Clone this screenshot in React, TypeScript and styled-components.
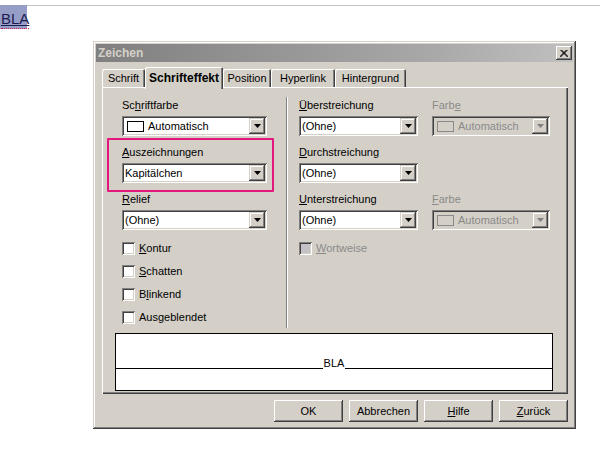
import React from 'react';
import styled, { createGlobalStyle } from 'styled-components';

const Global = createGlobalStyle`
  html, body { margin: 0; padding: 0; background: #fff; }
  body {
    font-family: "Liberation Sans", Arial, sans-serif;
    font-size: 11px;
    color: #000;
    width: 600px;
    height: 449px;
    overflow: hidden;
  }
  u { text-underline-offset: 1px; }
`;

const Doc = styled.div`
  display: flex;
  height: 41px;
`;

const Selection = styled.div`
  width: 27px;
  height: 24px;
  margin-top: 5px;
  background: #969ec8;
  display: flex;
  align-items: flex-end;
  padding-left: 1px;
  box-sizing: border-box;
`;

const Word = styled.span`
  font-size: 15px;
  line-height: 17px;
  color: #1c1c52;
  text-decoration: underline;
  text-decoration-color: #1c1c52;
  text-underline-offset: 1px;
  border-bottom: 1px dotted #d02050;
  padding-bottom: 1px;
`;

const Rule = styled.div`
  flex: 1;
  margin-top: 5px;
  border-top: 1px solid #c4c4c4;
`;

const Dialog = styled.div`
  margin-left: 93px;
  width: 483px;
  height: 388px;
  box-sizing: border-box;
  padding: 3px;
  background: #d4d0c8;
  box-shadow: inset -1px -1px #404040, inset 1px 1px #d4d0c8, inset -2px -2px #808080, inset 2px 2px #fff;
  display: flex;
  flex-direction: column;
`;

const TitleBar = styled.div`
  height: 18px;
  background: linear-gradient(90deg, #808080 0%, #a8a8a8 70%, #c0c0c0 100%);
  display: flex;
  align-items: center;
  justify-content: space-between;
  padding: 0 1px 0 2px;
`;

const Title = styled.span`
  font-weight: bold;
  font-size: 12px;
  color: #d4d0c8;
`;

const CloseButton = styled.div`
  width: 16px;
  height: 14px;
  background: #d4d0c8;
  box-shadow: inset -1px -1px #404040, inset 1px 1px #fff, inset -2px -2px #808080;
  display: flex;
  align-items: center;
  justify-content: center;
`;

const Body = styled.div`
  padding: 5px 5px 4px 6px;
  display: flex;
  flex-direction: column;
`;

const TabStrip = styled.div`
  height: 20px;
  display: flex;
  align-items: flex-end;
`;

const Tab = styled.div<{ $w: number; $active?: boolean }>`
  position: relative;
  z-index: ${p => (p.$active ? 1 : 0)};
  width: ${p => p.$w}px;
  height: ${p => (p.$active ? 22 : 18)}px;
  margin-bottom: ${p => (p.$active ? -2 : 0)}px;
  box-sizing: border-box;
  background: #d4d0c8;
  border-top-left-radius: 2px;
  border-top-right-radius: 2px;
  box-shadow: inset 1px 1px #fff, inset -1px 0 #404040, inset -2px 0 #808080;
  font-weight: ${p => (p.$active ? 'bold' : 'normal')};
  font-size: ${p => (p.$active ? 12 : 11)}px;
  display: flex;
  justify-content: center;
  padding-top: ${p => (p.$active ? 4 : 3)}px;
`;

const Panel = styled.div`
  width: 466px;
  height: 307px;
  box-sizing: border-box;
  background: #d4d0c8;
  box-shadow: inset 1px 1px #fff, inset -1px -1px #404040, inset -2px -2px #808080;
  display: flex;
  flex-direction: column;
`;

const Columns = styled.div`
  height: 246px;
  display: grid;
  grid-template-columns: 184px 2px 1fr;
`;

const LeftColumn = styled.div`
  padding: 12px 0 0 20px;
  display: flex;
  flex-direction: column;
  gap: 10px;
`;

const RightColumn = styled.div`
  padding: 12px 0 0 11px;
  display: flex;
  flex-direction: column;
  gap: 10px;
`;

const Separator = styled.div`
  margin: 10px 0 5px;
  border-left: 1px solid #808080;
  border-right: 1px solid #fff;
`;

const Group = styled.div<{ $highlight?: boolean }>`
  display: flex;
  flex-direction: column;
  gap: 4px;
  width: fit-content;
  ${p =>
    p.$highlight
      ? `
    border: 2px solid #e3187e;
    border-radius: 1px;
    padding: 6px 5px 7px 13px;
    margin: -8px 0 -9px -15px;
  `
      : ''}
`;

const Row = styled.div`
  display: flex;
  gap: 14px;
`;

const Label = styled.div<{ $disabled?: boolean }>`
  line-height: 13px;
  height: 13px;
  color: ${p => (p.$disabled ? '#8a8a8a' : '#000')};
  white-space: nowrap;
`;

const Listbox = styled.div<{ $w: number; $disabled?: boolean }>`
  width: ${p => p.$w}px;
  height: 20px;
  box-sizing: border-box;
  padding: 2px;
  display: flex;
  align-items: center;
  background: ${p => (p.$disabled ? '#d4d0c8' : '#fff')};
  box-shadow: inset 1px 1px #808080, inset -1px -1px #fff, inset 2px 2px #404040, inset -2px -2px #d4d0c8;
`;

const Value = styled.div<{ $disabled?: boolean }>`
  flex: 1;
  display: flex;
  align-items: center;
  gap: 4px;
  padding-left: 1px;
  color: ${p => (p.$disabled ? '#8a8a8a' : '#000')};
  white-space: nowrap;
`;

const Swatch = styled.div<{ $disabled?: boolean }>`
  width: 17px;
  height: 11px;
  box-sizing: border-box;
  margin-left: 2px;
  border: 1px solid ${p => (p.$disabled ? '#8a8a8a' : '#000')};
  background: ${p => (p.$disabled ? '#d4d0c8' : '#fff')};
`;

const DropButton = styled.div`
  width: 16px;
  height: 16px;
  flex: none;
  background: #d4d0c8;
  box-shadow: inset -1px -1px #404040, inset 1px 1px #d4d0c8, inset -2px -2px #808080, inset 2px 2px #fff;
  display: flex;
  align-items: center;
  justify-content: center;
`;

const Checks = styled.div<{ $top: number }>`
  margin-top: ${p => p.$top}px;
  display: flex;
  flex-direction: column;
  gap: 10px;
`;

const CheckRow = styled.div<{ $disabled?: boolean }>`
  display: flex;
  align-items: center;
  gap: 4px;
  height: 13px;
  line-height: 13px;
  color: ${p => (p.$disabled ? '#8a8a8a' : '#000')};
`;

const Box = styled.div<{ $disabled?: boolean }>`
  width: 13px;
  height: 13px;
  box-sizing: border-box;
  background: ${p => (p.$disabled ? '#c4c2c6' : '#fff')};
  box-shadow: inset 1px 1px #808080, inset -1px -1px #fff, inset 2px 2px #404040, inset -2px -2px #d4d0c8;
`;

const Preview = styled.div`
  margin: 0 15px 0 13px;
  height: 58px;
  box-sizing: border-box;
  background: #fff;
  border: 1px solid #000;
`;

const PreviewTop = styled.div`
  height: 34px;
  border-bottom: 1px solid #000;
  display: flex;
  justify-content: center;
  align-items: flex-end;
`;

const PreviewText = styled.span`
  line-height: 11px;
  margin-bottom: -1px;
  background: #fff;
  padding: 0 1px;
`;

const ButtonRow = styled.div`
  margin-top: 6px;
  display: flex;
  justify-content: flex-end;
  gap: 6px;
  width: 466px;
`;

const Button = styled.div`
  width: 69px;
  height: 22px;
  box-sizing: border-box;
  background: #d4d0c8;
  box-shadow: inset -1px -1px #404040, inset 1px 1px #fff, inset -2px -2px #808080;
  display: flex;
  align-items: center;
  justify-content: center;
`;

const Arrow: React.FC<{ disabled?: boolean }> = ({ disabled }) => (
  <svg width="7" height="4" viewBox="0 0 7 4">
    <polygon points="0,0 7,0 3.5,4" fill={disabled ? '#808080' : '#000'} />
  </svg>
);

const Select: React.FC<{ w: number; value: string; swatch?: boolean; disabled?: boolean }> = ({ w, value, swatch, disabled }) => (
  <Listbox $w={w} $disabled={disabled}>
    <Value $disabled={disabled}>
      {swatch && <Swatch $disabled={disabled} />}
      {value}
    </Value>
    <DropButton>
      <Arrow disabled={disabled} />
    </DropButton>
  </Listbox>
);

const Check: React.FC<{ children: React.ReactNode; disabled?: boolean }> = ({ children, disabled }) => (
  <CheckRow $disabled={disabled}>
    <Box $disabled={disabled} />
    <span>{children}</span>
  </CheckRow>
);

export default function App() {
  return (
    <>
      <Global />
      <Doc>
        <Selection>
          <Word>BLA</Word>
        </Selection>
        <Rule />
      </Doc>
      <Dialog>
        <TitleBar>
          <Title>Zeichen</Title>
          <CloseButton>
            <svg width="8" height="7" viewBox="0 0 8 7">
              <path d="M0.5 0 L7.5 7 M1.5 0 L8.5 7 M7.5 0 L0.5 7 M6.5 0 L-0.5 7" stroke="#000" strokeWidth="1" />
            </svg>
          </CloseButton>
        </TitleBar>
        <Body>
          <TabStrip>
            <Tab $w={43}>Schrift</Tab>
            <Tab $w={78} $active>Schrifteffekt</Tab>
            <Tab $w={48}>Position</Tab>
            <Tab $w={64}>Hyperlink</Tab>
            <Tab $w={71}>Hintergrund</Tab>
          </TabStrip>
          <Panel>
            <Columns>
              <LeftColumn>
                <Group>
                  <Label>Sc<u>h</u>riftfarbe</Label>
                  <Select w={145} value="Automatisch" swatch />
                </Group>
                <Group $highlight>
                  <Label><u>A</u>uszeichnungen</Label>
                  <Select w={145} value="Kapitälchen" />
                </Group>
                <Group>
                  <Label><u>R</u>elief</Label>
                  <Select w={145} value="(Ohne)" />
                </Group>
                <Checks $top={2}>
                  <Check><u>K</u>ontur</Check>
                  <Check><u>S</u>chatten</Check>
                  <Check>B<u>l</u>inkend</Check>
                  <Check>Aus<u>g</u>eblendet</Check>
                </Checks>
              </LeftColumn>
              <Separator />
              <RightColumn>
                <Row>
                  <Group>
                    <Label><u>Ü</u>berstreichung</Label>
                    <Select w={119} value="(Ohne)" />
                  </Group>
                  <Group>
                    <Label $disabled>Farb<u>e</u></Label>
                    <Select w={118} value="Automatisch" swatch disabled />
                  </Group>
                </Row>
                <Row>
                  <Group>
                    <Label><u>D</u>urchstreichung</Label>
                    <Select w={119} value="(Ohne)" />
                  </Group>
                </Row>
                <Row>
                  <Group>
                    <Label><u>U</u>nterstreichung</Label>
                    <Select w={119} value="(Ohne)" />
                  </Group>
                  <Group>
                    <Label $disabled><u>F</u>arbe</Label>
                    <Select w={118} value="Automatisch" swatch disabled />
                  </Group>
                </Row>
                <Checks $top={2}>
                  <Check disabled><u>W</u>ortweise</Check>
                </Checks>
              </RightColumn>
            </Columns>
            <Preview>
              <PreviewTop>
                <PreviewText>BLA</PreviewText>
              </PreviewTop>
            </Preview>
          </Panel>
          <ButtonRow>
            <Button>OK</Button>
            <Button>Abbrechen</Button>
            <Button><u>H</u>ilfe</Button>
            <Button><u>Z</u>urück</Button>
          </ButtonRow>
        </Body>
      </Dialog>
    </>
  );
}
